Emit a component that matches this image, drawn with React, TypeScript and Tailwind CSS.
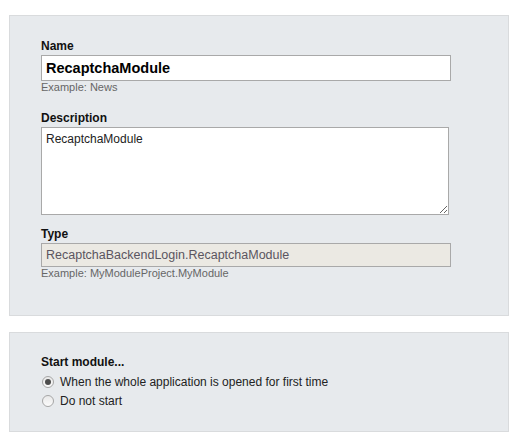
import React from "react";

const font = { fontFamily: '"Liberation Sans", Arial, sans-serif' };

function Radio({ checked, label }: { checked?: boolean; label: string }) {
  return (
    <label className="flex h-[19px] items-center text-[12px] leading-[14px] text-[#222]">
      <span className="ml-[1px] mr-[6px] flex h-[12px] w-[12px] items-center justify-center rounded-full border border-[#a6a6a6] bg-gradient-to-b from-[#e9e9e9] to-[#fbfbfb]">
        {checked && <span className="h-[6px] w-[6px] rounded-full bg-[#4d4d4d]" />}
      </span>
      {label}
    </label>
  );
}

export default function App() {
  return (
    <div className="min-h-[447px] bg-white pl-[9px] pt-[15px]" style={font}>
      <div className="h-[301px] w-[500px] border border-[#d9dbdd] bg-[#e7eaed] pl-[31px] pt-[23px]">
        <div className="text-[12px] font-bold leading-[14px] text-[#111]">Name</div>
        <input
          readOnly
          value="RecaptchaModule"
          className="mt-[2px] block h-[26px] w-[410px] border border-[#a9a9a9] bg-white px-[4px] text-[14.5px] font-bold text-black outline-none"
          style={font}
        />
        <div className="text-[11px] leading-[13px] text-[#666]">Example: News</div>

        <div className="mt-[17px] text-[12px] font-bold leading-[14px] text-[#111]">Description</div>
        <textarea
          readOnly
          defaultValue="RecaptchaModule"
          className="mt-[2px] block h-[88px] w-[408px] border border-[#a9a9a9] bg-white px-[4px] py-[4px] text-[12px] leading-[14px] text-[#222] outline-none"
          style={font}
        />

        <div className="mt-[12px] text-[12px] font-bold leading-[14px] text-[#111]">Type</div>
        <input
          readOnly
          value="RecaptchaBackendLogin.RecaptchaModule"
          className="mt-[2px] block h-[24px] w-[410px] border border-[#a9a9a9] bg-[#ebe9e3] px-[4px] text-[12.5px] text-[#5a5560] outline-none"
          style={font}
        />
        <div className="text-[11px] leading-[12px] text-[#666]">Example: MyModuleProject.MyModule</div>
      </div>

      <div className="mt-[16px] h-[100px] w-[500px] border border-[#d9dbdd] bg-[#e7eaed] pl-[31px] pt-[22px]">
        <div className="text-[12px] font-bold leading-[14px] text-[#111]">Start module...</div>
        <div className="mt-[3px]">
          <Radio checked label="When the whole application is opened for first time" />
          <Radio label="Do not start" />
        </div>
      </div>
    </div>
  );
}
